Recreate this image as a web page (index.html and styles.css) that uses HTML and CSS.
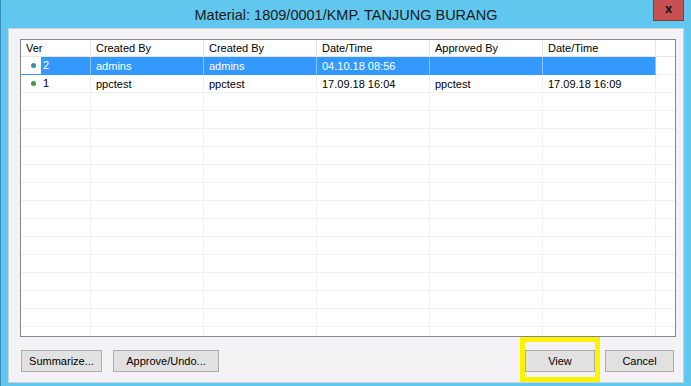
FILE: index.html
```html
<!DOCTYPE html>
<html lang="en">
<head>
    <meta charset="UTF-8">
    <meta name="viewport" content="width=device-width, initial-scale=1.0">
    <title>Material versions</title>
    <link rel="stylesheet" href="styles.css">
</head>
<body>

<div class="window">
    <div class="titlebar">
        <span class="title">Material: 1809/0001/KMP. TANJUNG BURANG</span>
        <button class="close">x</button>
    </div>

    <div class="client">
        <div class="list">
            <table class="grid">
                <colgroup>
                    <col class="colVer">
                    <col class="colWide">
                    <col class="colWide">
                    <col class="colWide">
                    <col class="colWide">
                    <col class="colWide">
                    <col>
                </colgroup>
                <thead>
                    <tr>
                        <th>Ver</th>
                        <th>Created By</th>
                        <th>Created By</th>
                        <th>Date/Time</th>
                        <th>Approved By</th>
                        <th>Date/Time</th>
                        <th class="filler"></th>
                    </tr>
                </thead>
                <tbody>
                    <tr class="selected">
                        <td class="ver"><span class="dot dotBlue"></span><span class="verNum">2</span></td>
                        <td>admins</td>
                        <td>admins</td>
                        <td>04.10.18 08:56</td>
                        <td></td>
                        <td></td>
                        <td class="filler"></td>
                    </tr>
                    <tr>
                        <td class="ver"><span class="dot dotGreen"></span><span class="verNum">1</span></td>
                        <td>ppctest</td>
                        <td>ppctest</td>
                        <td>17.09.18 16:04</td>
                        <td>ppctest</td>
                        <td>17.09.18 16:09</td>
                        <td class="filler"></td>
                    </tr>
                    <tr><td></td><td></td><td></td><td></td><td></td><td></td><td class="filler"></td></tr>
                    <tr><td></td><td></td><td></td><td></td><td></td><td></td><td class="filler"></td></tr>
                    <tr><td></td><td></td><td></td><td></td><td></td><td></td><td class="filler"></td></tr>
                    <tr><td></td><td></td><td></td><td></td><td></td><td></td><td class="filler"></td></tr>
                    <tr><td></td><td></td><td></td><td></td><td></td><td></td><td class="filler"></td></tr>
                    <tr><td></td><td></td><td></td><td></td><td></td><td></td><td class="filler"></td></tr>
                    <tr><td></td><td></td><td></td><td></td><td></td><td></td><td class="filler"></td></tr>
                    <tr><td></td><td></td><td></td><td></td><td></td><td></td><td class="filler"></td></tr>
                    <tr><td></td><td></td><td></td><td></td><td></td><td></td><td class="filler"></td></tr>
                    <tr><td></td><td></td><td></td><td></td><td></td><td></td><td class="filler"></td></tr>
                    <tr><td></td><td></td><td></td><td></td><td></td><td></td><td class="filler"></td></tr>
                    <tr><td></td><td></td><td></td><td></td><td></td><td></td><td class="filler"></td></tr>
                    <tr><td></td><td></td><td></td><td></td><td></td><td></td><td class="filler"></td></tr>
                    <tr><td></td><td></td><td></td><td></td><td></td><td></td><td class="filler"></td></tr>
                    <tr><td></td><td></td><td></td><td></td><td></td><td></td><td class="filler"></td></tr>
                    <tr><td></td><td></td><td></td><td></td><td></td><td></td><td class="filler"></td></tr>
                </tbody>
            </table>
        </div>

        <div class="actions">
            <button class="btn btnSummarize">Summarize...</button>
            <button class="btn btnApprove">Approve/Undo...</button>
            <span class="spacer"></span>
            <span class="marked"><button class="btn btnView">View</button></span>
            <button class="btn btnCancel">Cancel</button>
        </div>
    </div>
</div>

</body>
</html>
```

FILE: styles.css
```css
* {
    box-sizing: border-box;
}

body {
    margin: 0;
    font-family: 'Liberation Sans', Arial, sans-serif;
    background: #61c7ee;
}

.window {
    width: 691px;
    height: 386px;
    background: #61c7ee;
    border-left: 1px solid #3a8db6;
    padding: 0 7px 3px 7px;
    display: flex;
    flex-direction: column;
}

.titlebar {
    height: 28px;
    position: relative;
    display: flex;
    align-items: center;
    justify-content: center;
}

.title {
    font-size: 14.5px;
    color: #1b1b1b;
    padding-top: 2px;
}

.close {
    position: absolute;
    top: 0;
    right: 0;
    width: 31px;
    height: 21px;
    padding: 0 0 3px 0;
    background: #c75050;
    border: 1px solid #8b3a3a;
    border-top: none;
    color: #1a1a1a;
    font-family: 'DejaVu Sans', sans-serif;
    font-size: 12px;
    font-weight: bold;
}

.client {
    flex: 1;
    background: #f4f2f5;
    border: 1px solid #c9d3da;
    padding: 10px 7px 10px 11px;
    display: flex;
    flex-direction: column;
}

.list {
    height: 298px;
    border: 1px solid #828790;
    background: #fff;
    overflow: hidden;
}

.grid {
    width: 100%;
    table-layout: fixed;
    border-collapse: separate;
    border-spacing: 0;
    font-size: 11px;
    color: #000;
}

.colVer {
    width: 70px;
}

.colWide {
    width: 113px;
}

.grid th {
    height: 17px;
    padding: 0 5px;
    text-align: left;
    font-weight: normal;
    border-right: 1px solid #e5e5e5;
    border-bottom: 1px solid #e5e5e5;
    white-space: nowrap;
    overflow: hidden;
}

.grid td {
    height: 18px;
    padding: 0 5px;
    border-right: 1px solid #f0f0f0;
    border-bottom: 1px solid #f0f0f0;
    white-space: nowrap;
    overflow: hidden;
}

.grid .filler {
    border-right: none;
}

.grid td.ver {
    padding: 0;
}

.ver {
    display: flex;
    align-items: stretch;
}

.dot {
    width: 5px;
    height: 5px;
    border-radius: 50%;
    margin: 6px 5px 0 10px;
    flex: none;
}

.dotBlue {
    background: #3f8ea3;
}

.dotGreen {
    background: #3d9b3d;
}

.verNum {
    flex: 1;
    padding-left: 2px;
    line-height: 17px;
}

.selected td {
    background: #3399ff;
    color: #fff;
    border-right-color: #8cc4ff;
    border-bottom-color: #3399ff;
}

.selected td.ver {
    background: #fff;
}

.selected .verNum {
    background: #3399ff;
}

.selected td.filler {
    background: #fff;
    border-bottom-color: #f0f0f0;
}

.actions {
    margin-top: 13px;
    display: flex;
    gap: 10px;
}

.btn {
    height: 22px;
    padding: 0;
    border: 1px solid #adadad;
    background: #e1e1e1;
    color: #000;
    font-family: 'Liberation Sans', Arial, sans-serif;
    font-size: 11px;
}

.btnSummarize {
    width: 81px;
    margin-left: 1px;
}

.btnApprove {
    width: 106px;
    margin-left: 1px;
}

.spacer {
    flex: 1;
}

.marked {
    position: relative;
    display: flex;
}

.marked::after {
    content: '';
    position: absolute;
    top: -13px;
    left: -5px;
    right: -5px;
    bottom: -10px;
    border: 5px solid #fff200;
}

.btnView {
    width: 70px;
}

.btnCancel {
    width: 69px;
    margin-right: 2px;
}
```
